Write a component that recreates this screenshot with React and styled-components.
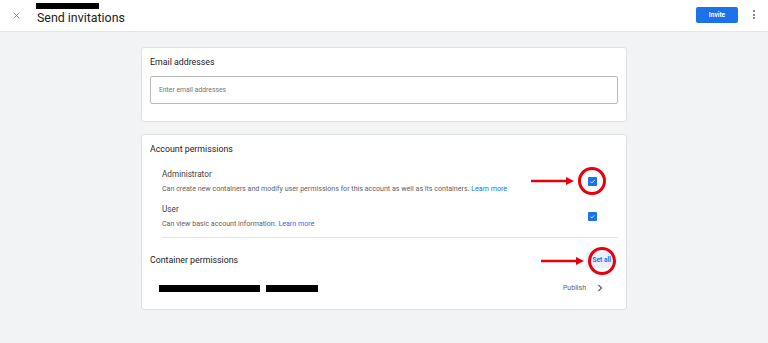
import React from 'react';
import styled, { createGlobalStyle } from 'styled-components';

const GlobalStyle = createGlobalStyle`
  html, body {
    margin: 0;
    padding: 0;
    background: #f1f3f4;
    font-family: Roboto, "Liberation Sans", Arial, sans-serif;
    color: #202124;
  }
  * { box-sizing: border-box; }
`;

const Page = styled.div`
  width: 768px;
  height: 343px;
  background: #f1f3f4;
  overflow: hidden;
`;

const TopBar = styled.header`
  height: 32px;
  background: #fff;
  border-bottom: 1px solid #e3e5e8;
  display: flex;
  align-items: center;
  padding: 0 12px 0 12px;
`;

const CloseBtn = styled.div`
  width: 8px;
  height: 8px;
  display: flex;
  align-items: center;
  justify-content: center;
  margin-top: -1px;
`;

const TitleBlock = styled.div`
  margin-left: 16px;
  display: flex;
  flex-direction: column;
  align-self: stretch;
  padding-top: 3px;
`;

const Redacted = styled.div`
  background: #000;
  width: ${(p) => p.w}px;
  height: ${(p) => p.h || 6}px;
  margin-right: ${(p) => p.mr || 0}px;
`;

const Title = styled.h1`
  margin: 1px 0 0 1px;
  font-size: 12.4px;
  line-height: 16px;
  font-weight: 400;
  color: #202124;
`;

const Spacer = styled.div`
  flex: 1;
`;

const InviteButton = styled.button`
  width: 42px;
  height: 16px;
  border: none;
  border-radius: 2px;
  background: #1a73e8;
  color: #fff;
  font-family: inherit;
  font-size: 6.5px;
  font-weight: 700;
  padding: 0;
  margin-top: -2px;
`;

const Kebab = styled.div`
  margin-left: 14px;
  width: 4px;
  display: flex;
  flex-direction: column;
  align-items: center;
  gap: 1.5px;
  margin-top: -2px;
  span {
    width: 2px;
    height: 2px;
    border-radius: 50%;
    background: #5f6368;
  }
`;

const Main = styled.main`
  width: 486px;
  margin: 15px auto 0;
  display: flex;
  flex-direction: column;
  gap: 12px;
`;

const Card = styled.section`
  background: #fff;
  border: 1px solid #dfe1e5;
  border-radius: 3px;
  padding: ${(p) => p.pad};
`;

const CardTitle = styled.h2`
  margin: 0;
  font-size: 8.8px;
  line-height: 12px;
  font-weight: 400;
  color: #202124;
`;

const EmailInput = styled.div`
  margin-top: 8px;
  height: 28px;
  border: 1px solid #b8babd;
  border-radius: 2px;
  display: flex;
  align-items: center;
  padding-left: 8px;
  font-size: 6.8px;
  color: #70757a;
`;

const PermList = styled.div`
  margin: 9px 0 0 12px;
`;

const PermRow = styled.div`
  display: flex;
  align-items: center;
  padding: 5px 0 6px;
`;

const PermText = styled.div`
  flex: 1;
`;

const PermLabel = styled.div`
  font-size: 8.2px;
  line-height: 10px;
  font-weight: 400;
  color: #3c4043;
`;

const PermDesc = styled.div`
  margin-top: 5px;
  font-size: 7.1px;
  line-height: 9px;
  color: #5f6368;
`;

const Link = styled.span`
  color: #1a73e8;
`;

const CheckWrap = styled.div`
  position: relative;
  width: 9px;
  height: 9px;
  margin-right: 21px;
`;

const Check = styled.div`
  width: 9px;
  height: 9px;
  border-radius: 1px;
  background: #1a73e8;
  display: flex;
  align-items: center;
  justify-content: center;
`;

const Divider = styled.div`
  height: 1px;
  background: #e3e5e8;
  margin-top: 3px;
`;

const ContainerRow = styled.div`
  height: 42px;
  padding-top: 1px;
  display: flex;
  align-items: center;
  justify-content: space-between;
`;

const SetAllWrap = styled.div`
  position: relative;
  margin-right: 4px;
`;

const SetAll = styled.div`
  background: #e8f0fe;
  color: #1a73e8;
  font-size: 6.6px;
  font-weight: 700;
  padding: 4px 3px 4px 6px;
  border-radius: 2px;
`;

const ContainerItem = styled.div`
  height: 16px;
  display: flex;
  align-items: center;
  padding-left: 9px;
`;

const Publish = styled.div`
  font-size: 7px;
  color: #5f6368;
  margin-right: 11px;
`;

const Chevron = styled.div`
  width: 6px;
  display: flex;
  margin-right: 15px;
`;

const Annotation = styled.svg`
  position: absolute;
  pointer-events: none;
  left: ${(p) => p.left}px;
  top: ${(p) => p.top}px;
  overflow: visible;
`;

const Marker = ({ left, top }) => (
  <Annotation left={left} top={top} width="76" height="30" viewBox="0 0 76 30">
    <line x1="0" y1="15" x2="36" y2="15" stroke="#e8000b" strokeWidth="2.4" />
    <polygon points="35,11 43,15 35,19" fill="#e8000b" />
    <circle cx="61" cy="15" r="12.5" fill="none" stroke="#e8000b" strokeWidth="3" />
  </Annotation>
);

const CheckIcon = () => (
  <svg width="7" height="7" viewBox="0 0 24 24">
    <path d="M5 12.5l4.5 4.5L19 7.5" fill="none" stroke="#fff" strokeWidth="3" />
  </svg>
);

const permissions = [
  {
    label: 'Administrator',
    desc: 'Can create new containers and modify user permissions for this account as well as its containers.',
    marked: true,
  },
  {
    label: 'User',
    desc: 'Can view basic account information.',
    marked: false,
  },
];

const App = () => {
  return (
    <Page>
      <GlobalStyle />
      <TopBar>
        <CloseBtn>
          <svg width="7" height="7" viewBox="0 0 10 10">
            <path d="M1 1l8 8M9 1l-8 8" stroke="#80868b" strokeWidth="1.2" />
          </svg>
        </CloseBtn>
        <TitleBlock>
          <Redacted w={63} h={6} />
          <Title>Send invitations</Title>
        </TitleBlock>
        <Spacer />
        <InviteButton>Invite</InviteButton>
        <Kebab>
          <span />
          <span />
          <span />
        </Kebab>
      </TopBar>

      <Main>
        <Card pad="8px 8px 17px">
          <CardTitle>Email addresses</CardTitle>
          <EmailInput>Enter email addresses</EmailInput>
        </Card>

        <Card pad="8px 8px 13px">
          <CardTitle>Account permissions</CardTitle>
          <PermList>
            {permissions.map((perm) => (
              <PermRow key={perm.label}>
                <PermText>
                  <PermLabel>{perm.label}</PermLabel>
                  <PermDesc>
                    {perm.desc} <Link>Learn more</Link>
                  </PermDesc>
                </PermText>
                <CheckWrap>
                  <Check>
                    <CheckIcon />
                  </Check>
                  {perm.marked && <Marker left={-57} top={-11} />}
                </CheckWrap>
              </PermRow>
            ))}
            <Divider />
          </PermList>
          <ContainerRow>
            <CardTitle>Container permissions</CardTitle>
            <SetAllWrap>
              <SetAll>Set all</SetAll>
              <Marker left={-45} top={-6} />
            </SetAllWrap>
          </ContainerRow>
          <ContainerItem>
            <Redacted w={101} h={7} mr={6} />
            <Redacted w={52} h={7} />
            <Spacer />
            <Publish>Publish</Publish>
            <Chevron>
              <svg width="6" height="8" viewBox="0 0 6 8">
                <path d="M1.5 1l3 3-3 3" fill="none" stroke="#5f6368" strokeWidth="1.2" />
              </svg>
            </Chevron>
          </ContainerItem>
        </Card>
      </Main>
    </Page>
  );
};

export default App;
